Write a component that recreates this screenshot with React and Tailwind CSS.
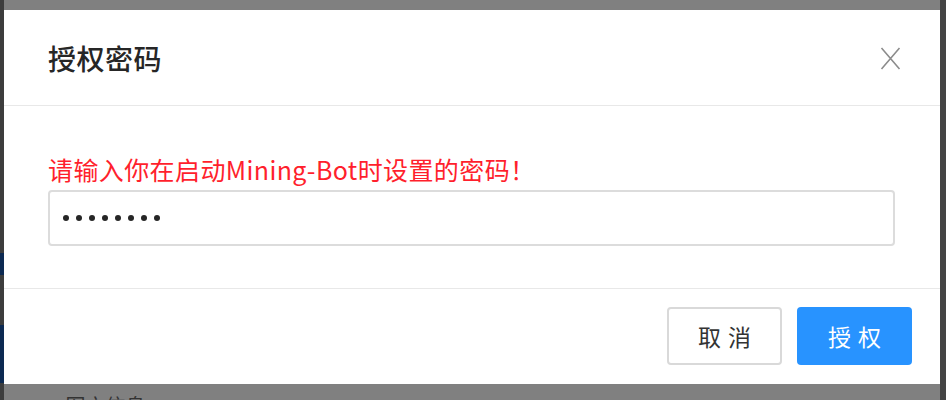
import React from 'react';

const font = { fontFamily: '"Noto Sans CJK SC", "Noto Sans", sans-serif' };

function CloseIcon() {
  return (
    <svg width="21" height="23" viewBox="0 0 21 23" fill="none" stroke="#8c8c8c" strokeWidth="1.6" aria-hidden="true">
      <path d="M1.5 1l18 21M19.5 1l-18 21" />
    </svg>
  );
}

export default function App() {
  return (
    <div className="w-[946px] h-[400px] flex bg-[#808080] overflow-hidden" style={font}>
      {/* left page edge */}
      <div className="w-[4px] h-full bg-[#3d3d3d] flex flex-col">
        <div className="h-[253px]" />
        <div className="h-[22px] bg-[#0d2a52]" />
        <div className="h-[50px]" />
        <div className="h-[58px] bg-[#0d2a52]" />
      </div>

      <div className="flex-1 flex flex-col">
        <div className="h-[10px] shrink-0" />
        {/* modal */}
        <div className="h-[374px] shrink-0 bg-white flex flex-col">
          <div className="h-[96px] border-b border-[#e8e8e8] flex items-center justify-between pl-[44px] pr-[39px]">
            <h1 className="text-[28px] leading-[36px] text-[#262626] font-medium tracking-[0.5px]">授权密码</h1>
            <button type="button" className="mt-[1px]">
              <CloseIcon />
            </button>
          </div>

          <div className="h-[183px] border-b border-[#e8e8e8] px-[44px] pt-[47px]">
            <p className="text-[25px] leading-[32px] text-[#ff1f2d] tracking-[0.4px]">请输入你在启动Mining-Bot时设置的密码！</p>
            <div className="mt-[5px] w-[847px] h-[56px] border-2 border-[#dcdcdc] rounded-[4px] flex items-center px-[13px]">
              <span className="flex gap-[7px]">
                {[0, 1, 2, 3, 4, 5, 6, 7].map((i) => (
                  <span key={i} className="w-[6px] h-[6px] rounded-full bg-[#262626]" />
                ))}
              </span>
            </div>
          </div>

          <div className="flex-1 flex items-start justify-end gap-[15px] pt-[18px] pr-[28px]">
            <button
              type="button"
              className="w-[115px] h-[58px] border-2 border-[#d9d9d9] rounded-[4px] bg-white text-[23px] text-[#333] tracking-[7px] pl-[7px]"
            >
              取消
            </button>
            <button
              type="button"
              className="w-[115px] h-[58px] rounded-[4px] bg-[#2893ff] text-[23px] text-white tracking-[7px] pl-[7px]"
            >
              授权
            </button>
          </div>
        </div>
        <div className="flex-1 pl-[46px] pt-[10px] text-[20px] leading-[24px] text-[#333]">
          <span className="text-[#c0392b]">+</span> 图文信息
        </div>
      </div>

      {/* right page edge */}
      <div className="w-[6px] h-full bg-[#444]" />
    </div>
  );
}
